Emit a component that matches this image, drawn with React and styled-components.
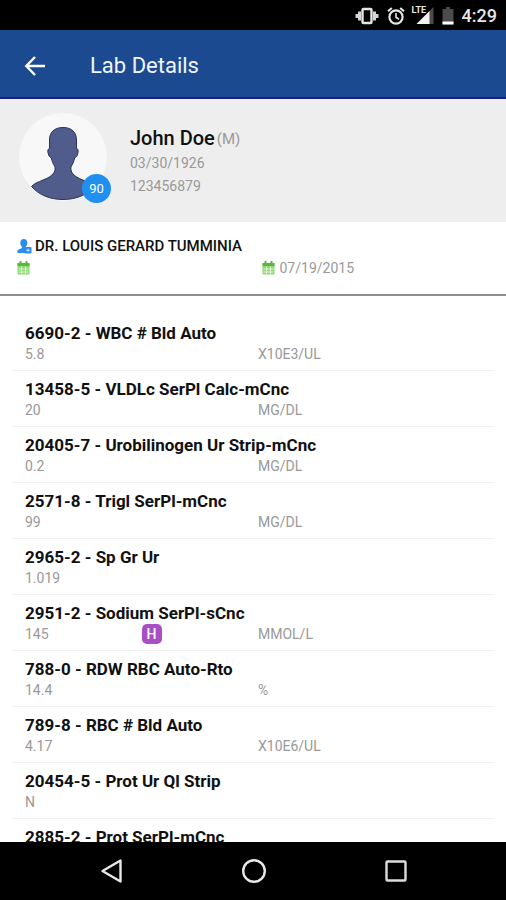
import React from 'react'
import styled, { createGlobalStyle } from 'styled-components'

const patient = {
    name: 'John Doe',
    gender: 'M',
    dob: '03/30/1926',
    mrn: '123456879',
    score: 90,
}

const order = {
    provider: 'DR. LOUIS GERARD TUMMINIA',
    collected: '',
    resulted: '07/19/2015',
}

const results = [
    { code: '6690-2', name: 'WBC # Bld Auto', value: '5.8', unit: 'X10E3/UL' },
    { code: '13458-5', name: 'VLDLc SerPl Calc-mCnc', value: '20', unit: 'MG/DL' },
    { code: '20405-7', name: 'Urobilinogen Ur Strip-mCnc', value: '0.2', unit: 'MG/DL' },
    { code: '2571-8', name: 'Trigl SerPl-mCnc', value: '99', unit: 'MG/DL' },
    { code: '2965-2', name: 'Sp Gr Ur', value: '1.019', unit: '' },
    { code: '2951-2', name: 'Sodium SerPl-sCnc', value: '145', unit: 'MMOL/L', flag: 'H' },
    { code: '788-0', name: 'RDW RBC Auto-Rto', value: '14.4', unit: '%' },
    { code: '789-8', name: 'RBC # Bld Auto', value: '4.17', unit: 'X10E6/UL' },
    { code: '20454-5', name: 'Prot Ur Ql Strip', value: 'N', unit: '' },
    { code: '2885-2', name: 'Prot SerPl-mCnc', value: '', unit: '' },
]

const VibrateIcon = () => (
    <svg width="24" height="18" viewBox="0 0 24 18" fill="none" aria-hidden="true">
        <path d="M3 4.500h3v9H3zM18 4.500h3v9h-3zM.5 7h2.500v4H.5zM21 7h2.500v4H21z" fill="#d4d4d4" />
        <rect x="7.500" y="2" width="9" height="14" rx="1" stroke="#e6e6e6" strokeWidth="2.400" />
    </svg>
)

const AlarmIcon = () => (
    <svg width="18" height="18" viewBox="0 0 18 18" fill="none" stroke="#e6e6e6" aria-hidden="true">
        <circle cx="9" cy="10" r="6.600" strokeWidth="2.200" />
        <path d="M9 6v4.300l3 1.900" strokeWidth="1.600" />
        <path d="M1 4.200L4.800 1M17 4.200L13.200 1" strokeWidth="2.100" />
    </svg>
)

const SignalIcon = () => (
    <svg width="21" height="18" viewBox="0 0 21 18" aria-hidden="true">
        <path d="M20.500 0v17H3.500z" fill="#4b4b4b" />
        <path d="M16.500 4v13H3.500z" fill="#f2f2f2" />
        <path d="M0 0h13v8H0z" fill="#000" />
    </svg>
)

const BatteryIcon = () => (
    <svg width="12" height="18" viewBox="0 0 12 18" aria-hidden="true">
        <path d="M4 0h4v2h3.500v15.500H.5V2H4z" fill="#4b4b4b" />
        <path d="M.5 14.500h11v3H.5z" fill="#fff" />
    </svg>
)

const BackArrow = () => (
    <svg width="22" height="20" viewBox="0 0 22 20" fill="none" stroke="#fff" strokeWidth="2.400" aria-hidden="true">
        <path d="M21 10H2.500M11 1L2.300 10L11 19" />
    </svg>
)

const Silhouette = () => (
    <svg width="88" height="88" viewBox="0 0 88 88" aria-hidden="true">
        <circle cx="44" cy="44" r="44" fill="#f8f8f8" />
        <path
            d="M44 14.500c-9 0-13.500 5-13.500 12.500v8.500c-2.200.3-2 3.500-.8 6.500.6 1.700 1.400 2.500 2.500 2.600.9 4 2 6.500 3.400 8.500 1.100 2 .6 5.500-1.600 7.900C30.500 65 25 66.500 20.500 68.500 17 70 14.500 71.300 12.500 73.500 20 82 31 86.500 44 86.500S68 82 75.500 73.500C73.500 71.300 71 70 67.500 68.500 63 66.500 57.500 65 54 61c-2.200-2.400-2.700-5.900-1.600-7.900 1.400-2 2.500-4.500 3.400-8.500 1.100-.1 1.900-.9 2.500-2.600 1.200-3 1.400-6.200-.8-6.500V27c0-7.500-4.500-12.500-13.500-12.500z"
            fill="#505c8b"
            stroke="#2b3355"
            strokeWidth="1"
        />
    </svg>
)

const DoctorIcon = () => (
    <svg width="15" height="15" viewBox="0 0 15 15" aria-hidden="true">
        <path d="M6.800 0C9 0 10.300 1.500 10.300 3.700c0 1.600-.7 3-1.500 3.900v1.200l1.400.8V14H.6c-.8-2.300.2-3.300 2-3.900 1.300-.4 2.200-.7 2.200-1.300V7.600C4 6.700 3.300 5.300 3.300 3.700 3.300 1.500 4.600 0 6.800 0z" fill="#2a8cec" />
        <rect x="7.500" y="8" width="7" height="6.500" rx="1" fill="#2a8cec" />
        <path d="M9.300 11.300h3.400M11 9.800v3" stroke="#cfe6ff" strokeWidth="1.100" />
    </svg>
)

const CalendarIcon = () => (
    <svg width="13" height="14" viewBox="0 0 13 14" aria-hidden="true">
        <rect x=".5" y="2" width="12" height="11.500" rx="1" fill="#8ed873" />
        <path d="M.5 2h12v3H.5z" fill="#58b83a" />
        <path d="M3.500 0v3.500M9.500 0v3.500" stroke="#58b83a" strokeWidth="2" />
        <path d="M1.500 8h10M1.500 11h10M4.500 5.500v7.300M8.500 5.500v7.300" stroke="#e4f7dc" strokeWidth="1" />
    </svg>
)

const App = () => {
    return (
        <>
            <GlobalStyle />
            <Screen>
                <StatusBar>
                    <VibrateIcon />
                    <AlarmIcon />
                    <Network>
                        <SignalIcon />
                        <NetworkType>LTE</NetworkType>
                    </Network>
                    <BatteryIcon />
                    <Clock>4:29</Clock>
                </StatusBar>

                <Header>
                    <BackButton type="button" aria-label="Back">
                        <BackArrow />
                    </BackButton>
                    <Title>Lab Details</Title>
                </Header>

                <PatientCard>
                    <Avatar>
                        <Silhouette />
                        <Score>{patient.score}</Score>
                    </Avatar>
                    <div>
                        <PatientName>
                            {patient.name}
                            <span>({patient.gender})</span>
                        </PatientName>
                        <PatientInfo>{patient.dob}</PatientInfo>
                        <PatientInfo>{patient.mrn}</PatientInfo>
                    </div>
                </PatientCard>

                <OrderInfo>
                    <Provider>
                        <DoctorIcon />
                        {order.provider}
                    </Provider>
                    <Dates>
                        <DateItem><CalendarIcon />{order.collected}</DateItem>
                        <DateItem><CalendarIcon />{order.resulted}</DateItem>
                    </Dates>
                </OrderInfo>

                <ResultList>
                    {results.map((item) => (
                        <Result key={item.code}>
                            <ResultName>{item.code} - {item.name}</ResultName>
                            <ResultData>
                                <span>{item.value}</span>
                                <span>{item.flag && <Flag>{item.flag}</Flag>}</span>
                                <span>{item.unit}</span>
                            </ResultData>
                        </Result>
                    ))}
                </ResultList>

                <NavBar>
                    <NavButton type="button" aria-label="Back">
                        <svg width="24" height="26" viewBox="0 0 24 26" fill="none" stroke="#e8e8e8" strokeWidth="2.400" strokeLinejoin="round">
                            <path d="M20.500 2.500v21L2.500 13z" />
                        </svg>
                    </NavButton>
                    <NavButton type="button" aria-label="Home">
                        <svg width="26" height="26" viewBox="0 0 26 26" fill="none" stroke="#e8e8e8" strokeWidth="2.400">
                            <circle cx="13" cy="13" r="10.800" />
                        </svg>
                    </NavButton>
                    <NavButton type="button" aria-label="Recent apps">
                        <svg width="24" height="24" viewBox="0 0 24 24" fill="none" stroke="#dcdcdc" strokeWidth="2.400">
                            <rect x="2.500" y="2.500" width="19" height="19" rx="1" />
                        </svg>
                    </NavButton>
                </NavBar>
            </Screen>
        </>
    )
}

const GlobalStyle = createGlobalStyle`
    * {
        box-sizing: border-box;
        margin: 0;
        padding: 0;
    }
    body {
        font-family: Roboto, 'Liberation Sans', sans-serif;
        background: #fff;
        color: #111;
    }
    svg {
        display: block;
        flex-shrink: 0;
    }
    button {
        border: none;
        background: none;
        cursor: pointer;
    }
`

const Screen = styled.div`
    display: flex;
    flex-direction: column;
    height: 100vh;
    overflow: hidden;
`

const StatusBar = styled.div`
    display: flex;
    align-items: center;
    justify-content: flex-end;
    flex-shrink: 0;
    gap: 8px;
    height: 30px;
    padding: 2px 9px 0;
    background: #000;
    color: #e6e6e6;
`

const Network = styled.div`
    position: relative;
`

const NetworkType = styled.span`
    position: absolute;
    top: -2px;
    left: -1px;
    font-size: 9px;
    font-weight: 700;
    line-height: 10px;
`

const Clock = styled.span`
    font-size: 18px;
    font-weight: 500;
    line-height: 28px;
`

const Header = styled.header`
    display: flex;
    align-items: center;
    flex-shrink: 0;
    gap: 36px;
    height: 69px;
    padding: 4px 16px 0;
    background: #1c4a91;
    border-bottom: 2px solid #1c1c86;
`

const BackButton = styled.button`
    padding: 8px;
`

const Title = styled.h1`
    color: #f2f6ff;
    font-size: 22px;
    font-weight: 400;
    line-height: 28px;
`

const PatientCard = styled.section`
    display: flex;
    align-items: center;
    flex-shrink: 0;
    gap: 23px;
    padding: 14px 19px 21px;
    background: #eee;
`

const Avatar = styled.div`
    position: relative;
`

const Score = styled.span`
    position: absolute;
    right: -4px;
    bottom: -2px;
    width: 29px;
    border-radius: 50%;
    background: #2090f0;
    color: #fff;
    font-size: 13px;
    line-height: 29px;
    text-align: center;
`

const PatientName = styled.h2`
    padding-top: 8px;
    font-size: 20px;
    font-weight: 500;
    line-height: 26px;

    span {
        margin-left: 2px;
        color: #999;
        font-size: 15px;
        font-weight: 400;
        vertical-align: 1px;
    }
`

const PatientInfo = styled.p`
    color: #999;
    font-size: 14px;
    line-height: 23px;
`

const OrderInfo = styled.section`
    flex-shrink: 0;
    padding: 13px 0 15px 17px;
    border-bottom: 2px solid #8e8e8e;
`

const Provider = styled.p`
    display: flex;
    align-items: center;
    gap: 3px;
    font-size: 15px;
    font-weight: 500;
    line-height: 22px;
`

const Dates = styled.div`
    display: grid;
    grid-template-columns: 1fr 1fr;
`

const DateItem = styled.div`
    display: flex;
    align-items: center;
    gap: 5px;
    min-height: 22px;
    color: #999;
    font-size: 14px;
`

const ResultList = styled.ul`
    flex: 1;
    min-height: 0;
    overflow: hidden;
    padding: 19px 11px 0 12px;
    list-style: none;
`

const Result = styled.li`
    height: 56px;
    padding: 7px 4px 0 13px;
    border-bottom: 1px solid #f0f0f0;
`

const ResultName = styled.h3`
    font-size: 17px;
    font-weight: 700;
    line-height: 22px;
`

const ResultData = styled.div`
    display: grid;
    grid-template-columns: 1fr 1fr 2fr;
    color: #999;
    font-size: 14px;
    line-height: 20px;
`

const Flag = styled.b`
    display: block;
    width: 20px;
    border-radius: 5px;
    background: #a94fc4;
    color: #fff;
    font-weight: 500;
    text-align: center;
`

const NavBar = styled.nav`
    display: flex;
    align-items: center;
    justify-content: center;
    flex-shrink: 0;
    gap: 94px;
    height: 58px;
    padding-left: 2px;
    background: #000;
`

const NavButton = styled.button`
    display: flex;
    align-items: center;
    justify-content: center;
    width: 48px;
    height: 48px;
`

export default App
